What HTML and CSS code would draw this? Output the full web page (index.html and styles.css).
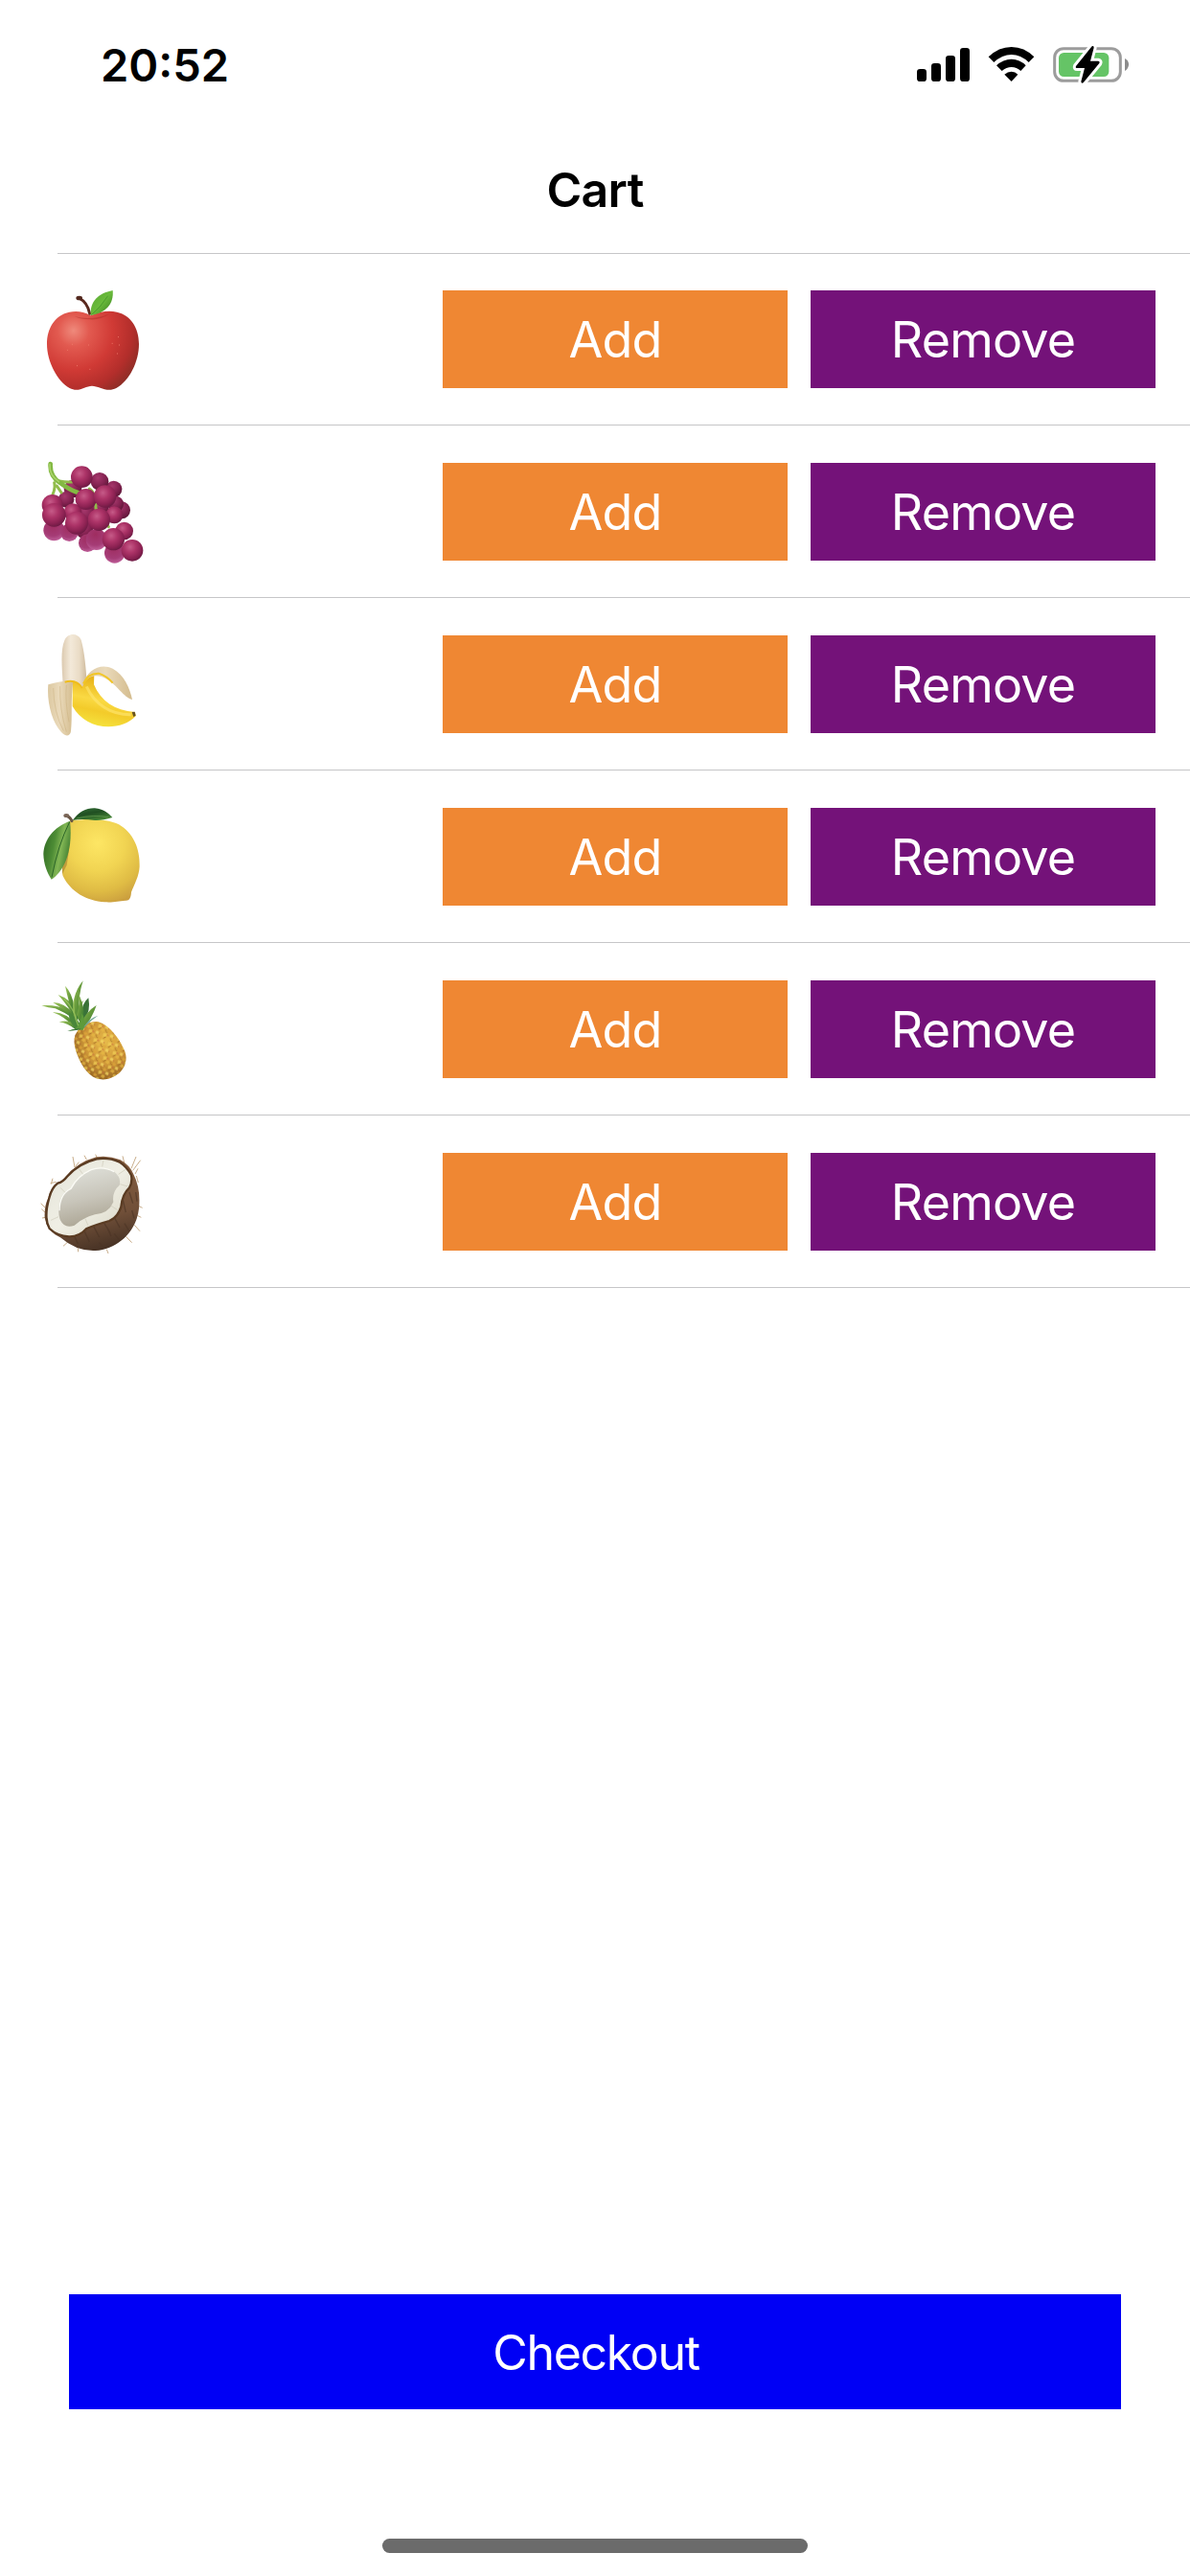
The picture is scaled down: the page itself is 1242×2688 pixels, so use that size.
FILE: index.html
```html
<!DOCTYPE html>
<html lang="en">
<head>
<meta charset="utf-8">
<title>Cart</title>
<link rel="stylesheet" href="styles.css">
</head>
<body>
<div class="screen">
  <header class="status">
    <time class="clock">20:52</time>
    <svg class="indicators" viewBox="0 0 810 240" aria-hidden="true">
      <g>
        <rect x="81" y="126" width="30" height="39" rx="10"/>
        <rect x="126" y="108" width="30" height="57" rx="10"/>
        <rect x="171" y="84" width="30" height="81" rx="10"/>
        <rect x="216" y="60" width="30" height="105" rx="10"/>
      </g>
      <path d="M305 88Q337 57 377 57T448 88L431 105Q406 81 377 81T322 105Z"/>
      <path d="M330 115Q351 95 377 95T422 115L406 132Q393 120 377 120T347 132Z"/>
      <path d="M355 143Q365 134 377 134T397 143L377 165Z"/>
      <rect x="512" y="62" width="206" height="101" rx="28" fill="none" stroke="#9c9c9c" stroke-width="9"/>
      <path d="M732 93Q744 99 744 112T732 132Z" fill="#8c8c8c"/>
      <rect x="525" y="75" width="157" height="75" rx="16" fill="#65c466"/>
      <path class="bolt" d="M629 55L579 117Q576 123 583 123H606L595 165Q595 172 602 169L652 108Q655 102 648 101H624L635 59Q635 52 629 55Z"/>
    </svg>
  </header>
  <h1 class="title">Cart</h1>
  <ul class="list">
    <li class="row">
      <svg class="fruit" viewBox="0 0 390 390" role="img" aria-label="Apple">
        <defs>
          <radialGradient id="apple" gradientUnits="userSpaceOnUse" cx="140" cy="165" r="225"><stop offset="0" stop-color="#ef8a7c"/><stop offset=".22" stop-color="#e25a50"/><stop offset=".55" stop-color="#d03a35"/><stop offset=".82" stop-color="#b32e2b"/><stop offset="1" stop-color="#8f2d26"/></radialGradient>
          <linearGradient id="appleLeaf" x1="0" y1="0" x2="1" y2="1"><stop offset=".2" stop-color="#5fae35"/><stop offset=".5" stop-color="#6abb3c"/><stop offset="1" stop-color="#347a1c"/></linearGradient>
        </defs>
        <path d="M194 118C170 104 148 103 127 107C84 116 57 155 57 207C57 262 90 324 128 345C157 360 176 338 198 338C220 338 245 360 274 345C315 323 345 262 345 207C345 155 318 116 276 107C248 101 222 106 194 118Z" fill="url(#apple)"/>
        <path d="M143 120Q194 135 252 113Q223 132 192 130Q163 130 143 120Z" fill="#a92825" opacity=".45"/>
        <path d="M120 226h3M150 275h3M186 210h3M279 185h3M276 237h3M282 210h3M190 286h3M260 205h3M135 208h3" stroke="#eb7767" stroke-width="3"/>
        <path d="M157 63Q184 76 191 112" fill="none" stroke="#59281d" stroke-width="9" stroke-linecap="round"/>
        <ellipse cx="158" cy="63" rx="10" ry="7" fill="#542a20"/>
        <path d="M194 117C191 74 217 48 263 39C267 82 241 110 194 117Z" fill="url(#appleLeaf)"/>
        <path d="M196 116Q223 95 248 56" fill="none" stroke="#3d8d25" stroke-width="2"/>
      </svg>
      <button class="btn add">Add</button>
      <button class="btn remove">Remove</button>
    </li>
    <li class="row">
      <svg class="fruit" viewBox="0 0 390 390" role="img" aria-label="Grapes">
        <defs>
          <radialGradient id="grape" cx=".4" cy=".34" r=".68"><stop offset="0" stop-color="#c65b88"/><stop offset=".4" stop-color="#ad3468"/><stop offset=".76" stop-color="#8d2253"/><stop offset="1" stop-color="#6c1a43"/></radialGradient>
          <radialGradient id="grapeDark" cx=".4" cy=".3" r=".7"><stop offset="0" stop-color="#a6386c"/><stop offset=".6" stop-color="#842251"/><stop offset="1" stop-color="#601739"/></radialGradient>
          <radialGradient id="grapeLow" cx=".45" cy=".25" r=".8"><stop offset="0" stop-color="#9f2d60"/><stop offset=".65" stop-color="#a53c76"/><stop offset="1" stop-color="#c466a0"/></radialGradient>
        </defs>
        <g fill="url(#grapeDark)">
          <circle cx="266" cy="121" r="26"/><circle cx="222" cy="97" r="28"/><circle cx="138" cy="120" r="28"/><circle cx="291" cy="187" r="27"/><circle cx="272" cy="168" r="25"/><circle cx="180" cy="200" r="30"/><circle cx="175" cy="250" r="27"/><circle cx="117" cy="154" r="25"/><circle cx="225" cy="180" r="26"/>
        </g>
        <g fill="none" stroke="#91bc4b" stroke-width="9" stroke-linecap="round"><path d="M80 101Q84 118 75 138M88 111L102 132M96 96Q122 101 139 98M190 120Q210 130 210 182L250 239"/></g>
        <path d="M68 42C66 69 76 87 97 101S132 126 154 132" fill="none" stroke="#83b943" stroke-width="14" stroke-linecap="round"/>
        <path d="M66 44C64 67 75 85 94 98" fill="none" stroke="#a8d269" stroke-width="5" stroke-linecap="round"/>
        <g fill="url(#grapeLow)">
          <circle cx="79" cy="250" r="33"/><circle cx="127" cy="257" r="28"/><circle cx="184" cy="290" r="28"/><circle cx="212" cy="279" r="33"/><circle cx="269" cy="321" r="32"/>
        </g>
        <g fill="url(#grape)">
          <circle cx="166" cy="83" r="34"/><circle cx="74" cy="171" r="33"/><circle cx="138" cy="194" r="28"/><circle cx="179" cy="153" r="33"/><circle cx="239" cy="144" r="35"/><circle cx="268" cy="202" r="27"/><circle cx="79" cy="202" r="37"/><circle cx="150" cy="227" r="36"/><circle cx="220" cy="217" r="35"/><circle cx="299" cy="252" r="28"/><circle cx="265" cy="278" r="35"/><circle cx="324" cy="313" r="34"/>
        </g>
      </svg>
      <button class="btn add">Add</button>
      <button class="btn remove">Remove</button>
    </li>
    <li class="row">
      <svg class="fruit" viewBox="0 0 390 390" role="img" aria-label="Banana">
        <defs>
          <linearGradient id="bananaFlesh"><stop offset="0" stop-color="#dccab0"/><stop offset=".35" stop-color="#f3e9d9"/><stop offset=".7" stop-color="#eadcc6"/><stop offset="1" stop-color="#cdb99b"/></linearGradient>
          <linearGradient id="bananaSkin" x1=".35" y1=".1" x2=".15" y2=".9"><stop offset="0" stop-color="#e9b51b"/><stop offset=".45" stop-color="#fad943"/><stop offset=".7" stop-color="#f3cb2a"/><stop offset="1" stop-color="#f5e03b"/></linearGradient>
          <linearGradient id="bananaPeel"><stop offset="0" stop-color="#dcc8a0"/><stop offset=".45" stop-color="#eadabb"/><stop offset="1" stop-color="#d4bc8e"/></linearGradient>
        </defs>
        <path d="M107 191C104 140 99 83 112 55C121 31 153 30 164 53C175 91 179 143 182 184L168 204Q140 181 107 191Z" fill="url(#bananaFlesh)"/>
        <path d="M137 184Q157 182 167 203Q176 174 205 159L204 193C226 245 268 274 333 279L335 292C299 330 230 335 184 308Q154 291 137 261Z" fill="url(#bananaSkin)"/>
        <path d="M181 199C206 254 256 288 320 287" fill="none" stroke="#ffe671" stroke-width="9" opacity=".6"/>
        <path d="M323 279L332 278L335 290L328 294Z" fill="#675322"/>
        <path d="M171 189C184 147 225 124 263 143C298 161 317 205 324 240C298 235 276 193 242 175C218 161 190 162 171 189Z" fill="url(#bananaPeel)"/>
        <path d="M171 190Q185 157 219 158Q244 166 263 188" fill="none" stroke="#f2c625" stroke-width="6"/>
        <path d="M139 182C112 181 88 186 61 193C56 248 73 315 105 345C117 357 130 354 132 339C137 294 131 239 139 182Z" fill="url(#bananaPeel)"/>
        <path d="M77 204Q78 280 109 338M98 198Q96 270 118 341M118 194Q113 245 126 310" fill="none" stroke="#c8ad7b" stroke-width="3" opacity=".45"/>
        <path d="M113 185Q150 175 167 204" fill="none" stroke="#efbd1c" stroke-width="6"/>
      </svg>
      <button class="btn add">Add</button>
      <button class="btn remove">Remove</button>
    </li>
    <li class="row">
      <svg class="fruit" viewBox="0 0 390 390" role="img" aria-label="Lemon">
        <defs>
          <radialGradient id="lemon" gradientUnits="userSpaceOnUse" cx="215" cy="150" r="215"><stop offset="0" stop-color="#fde664"/><stop offset=".4" stop-color="#f1d452"/><stop offset=".7" stop-color="#dfbb44"/><stop offset="1" stop-color="#c2933c"/></radialGradient>
          <linearGradient id="lemonLeaf" x1="0" y1=".2" x2="1" y2=".6"><stop offset="0" stop-color="#2f6923"/><stop offset=".4" stop-color="#4d8c35"/><stop offset=".65" stop-color="#82b654"/><stop offset="1" stop-color="#38772c"/></linearGradient>
          <linearGradient id="lemonLeafTop" x1="0" y1="0" x2=".6" y2="1"><stop offset="0" stop-color="#347137"/><stop offset=".5" stop-color="#204f22"/><stop offset="1" stop-color="#438434"/></linearGradient>
        </defs>
        <path d="M130 79C184 72 247 72 282 91C326 116 349 166 347 222C346 252 330 280 321 303C320 321 315 330 303 329C280 330 267 336 238 334C181 330 131 302 107 252C102 232 103 165 130 79Z" fill="url(#lemon)"/>
        <path d="M130 80Q102 158 105 246L119 218Q130 158 130 80Z" fill="#98722b" opacity=".5"/>
        <path d="M137 78C158 51 180 39 207 40C233 42 251 57 262 69C240 75 223 79 207 78C183 75 158 73 137 78Z" fill="url(#lemonLeafTop)"/>
        <path d="M151 72Q203 59 250 68" fill="none" stroke="#649a51" stroke-width="3" opacity=".7"/>
        <path d="M129 80C78 99 47 139 46 183C47 218 58 242 71 263C105 241 140 184 129 80Z" fill="url(#lemonLeaf)"/>
        <path d="M128 83Q92 154 72 256" fill="none" stroke="#2b6528" stroke-width="3"/>
        <path d="M116 64Q129 67 135 80" fill="none" stroke="#695544" stroke-width="9" stroke-linecap="round"/>
        <ellipse cx="118" cy="63" rx="9" ry="6" fill="#7a6658"/>
      </svg>
      <button class="btn add">Add</button>
      <button class="btn remove">Remove</button>
    </li>
    <li class="row">
      <svg class="fruit" viewBox="0 0 390 390" role="img" aria-label="Pineapple">
        <defs>
          <radialGradient id="pine" cx=".6" cy=".35" r=".7"><stop offset="0" stop-color="#e6ba4a"/><stop offset=".55" stop-color="#cf9738"/><stop offset="1" stop-color="#8e5f20"/></radialGradient>
          <linearGradient id="pineLeaf" x1="0" y1="0" x2="1" y2="1"><stop offset="0" stop-color="#9cc35a"/><stop offset=".5" stop-color="#62973a"/><stop offset="1" stop-color="#2e6f32"/></linearGradient>
          <pattern id="pineScale" width="34" height="32" patternUnits="userSpaceOnUse" patternTransform="rotate(-28)">
            <path d="M2 11L9 2L17 8L12 15Z" fill="#f3d257"/><path d="M20 5L29 3L32 12L24 14Z" fill="#e0a63a"/><path d="M5 22L14 18L18 27L10 31Z" fill="#e8b944"/><path d="M21 21L28 16L33 24L26 30Z" fill="#f7dd66"/><path d="M14 13L20 12L18 19Z" fill="#c8603c"/><path d="M28 28L33 27L31 32Z" fill="#bd5c3a"/><path d="M0 17L10 16M18 1L20 7M17 30L22 29" stroke="#9c641f" stroke-width="3"/>
          </pattern>
        </defs>
        <path d="M145 211C157 184 184 168 213 168C246 173 284 217 301 262C311 287 300 316 282 330C260 348 235 354 212 346C180 333 160 296 148 260Q139 233 145 211Z" fill="url(#pine)"/>
        <path d="M145 211C157 184 184 168 213 168C246 173 284 217 301 262C311 287 300 316 282 330C260 348 235 354 212 346C180 333 160 296 148 260Q139 233 145 211Z" fill="url(#pineScale)" opacity=".7"/>
        <g fill="url(#pineLeaf)">
          <path d="M187 94Q195 138 173 163L165 142Q169 108 187 94Z" fill="#397238"/>
          <path d="M170 102Q160 137 172 158L165 176L148 151Q153 116 170 102Z"/>
          <path d="M212 117Q199 156 170 193L160 181Q178 137 212 117Z"/>
          <path d="M217 149Q196 163 176 184L168 192Q187 157 217 149Z" fill="#74a99a"/>
          <path d="M40 118Q84 114 124 133L141 159Q112 139 83 127Q62 125 40 118Z"/>
          <path d="M76 108Q108 107 143 144L151 175Q112 129 76 108Z"/>
          <path d="M75 139Q114 136 154 181L144 187Q111 151 75 139Z"/>
          <path d="M95 169Q135 160 163 187L149 194Q122 173 95 169Z"/>
          <path d="M92 84Q129 96 154 140L153 169Q123 118 92 84Z"/>
          <path d="M114 56Q137 81 142 121L139 148Q126 112 114 56Z"/>
          <path d="M170 40Q154 91 157 140L143 166Q127 92 170 40Z"/>
          <path d="M153 74Q164 107 150 146L166 177Q184 137 153 74Z"/>
          <path d="M125 138Q147 151 165 182L150 195Q124 168 125 138Z" fill="#4a873a"/>
          <path d="M166 142Q182 165 170 195L145 191Q162 176 166 142Z" fill="#5d9a3b"/>
          <path d="M121 198Q145 187 166 191Q139 197 121 198Z" fill="#3c783b"/>
        </g>
        <path d="M142 101Q135 134 155 181M111 97Q139 124 153 170" fill="none" stroke="#a4cc62" stroke-width="4" opacity=".7"/>
      </svg>
      <button class="btn add">Add</button>
      <button class="btn remove">Remove</button>
    </li>
    <li class="row">
      <svg class="fruit" viewBox="0 0 390 390" role="img" aria-label="Coconut">
        <defs>
          <linearGradient id="husk" x1=".4" y1="0" x2=".65" y2="1"><stop offset="0" stop-color="#8b6242"/><stop offset=".65" stop-color="#715039"/><stop offset="1" stop-color="#443023"/></linearGradient>
          <linearGradient id="hollow" x1=".4" y1="0" x2=".65" y2="1"><stop offset="0" stop-color="#dedfd8"/><stop offset=".5" stop-color="#c8c5ba"/><stop offset="1" stop-color="#a8a18f"/></linearGradient>
          <linearGradient id="meat" x1="0" y1="0" x2="1" y2="1"><stop offset="0" stop-color="#e3e3d8"/><stop offset=".5" stop-color="#f0efe5"/><stop offset="1" stop-color="#d8d5c4"/></linearGradient>
        </defs>
        <g fill="none" stroke="#c9ae8b" stroke-width="3"><path d="M144 85L138 51M145 84L157 68M181 60L174 47M214 54L209 44M299 70L294 49M321 88L336 51M326 94L350 62M333 105L342 88M343 132L337 111M70 137L75 119M86 130L68 134M51 210L38 197M51 225L40 215M52 241L42 243M343 205L356 211M340 235L352 241M331 265L348 284M304 301L323 320M244 341L249 354M154 337L155 349M120 320L108 331"/></g>
        <path d="M61 181Q68 148 88 132Q104 131 112 118Q151 68 212 52Q250 46 287 61Q316 77 328 106Q351 150 345 213C338 284 279 341 209 345Q150 348 99 304Q56 283 50 242Q48 205 61 181Z" fill="url(#husk)"/>
        <path d="M295 187L304 225M315 162L326 197M323 219L330 244M267 239L285 273M300 260L315 285M235 257L256 291M203 268L221 303M173 281L190 318M268 292L285 314M221 320L233 334M143 300L154 323M245 272L258 300M335 162L339 191" stroke="#4b3425" stroke-width="4" opacity=".6"/>
        <path d="M64 180Q72 148 91 134Q107 130 120 113Q156 72 213 58Q252 53 283 67Q307 82 321 109Q325 132 315 148Q293 168 289 208Q279 240 252 252Q209 264 181 276Q158 302 126 301Q89 299 65 276Q46 243 64 180Z" fill="url(#meat)" stroke="#5a3b22" stroke-width="7"/>
        <path d="M95 205Q98 165 132 151Q152 112 195 92Q232 79 268 98Q291 117 284 140Q260 161 265 193Q250 229 207 232Q171 241 143 266Q112 277 99 250Q91 230 95 205Z" fill="url(#hollow)"/>
        <path d="M96 220Q96 168 132 151Q153 111 195 92Q232 79 267 98" fill="none" stroke="#fbfbf5" stroke-width="4"/>
        <path d="M99 148L114 163M157 89L170 106M234 61L230 82M303 91L281 106M310 144L286 137M278 218L257 204M186 267L177 245M69 250L93 239" stroke="#cfccba" stroke-width="3" opacity=".65"/>
      </svg>
      <button class="btn add">Add</button>
      <button class="btn remove">Remove</button>
    </li>
  </ul>
  <footer class="footer">
    <button class="checkout">Checkout</button>
    <div class="home"></div>
  </footer>
</div>
</body>
</html>
```
FILE: styles.css
```css
* { box-sizing: border-box; }

body {
  margin: 0;
  background: #fff;
  color: #000;
  font-family: Inter, "Liberation Sans", sans-serif;
}

.screen {
  display: flex;
  flex-direction: column;
  height: 2688px;
}

.status {
  display: flex;
  justify-content: space-between;
  align-items: flex-start;
  height: 132px;
  padding: 30px 42px 0 105px;
}

.clock {
  padding-top: 10px;
  font-size: 47px;
  font-weight: 600;
  line-height: 56px;
}

.indicators {
  width: 270px;
  height: 80px;
}

.bolt {
  stroke: #fff;
  stroke-width: 18px;
  stroke-linejoin: round;
  paint-order: stroke;
}

.title {
  height: 132px;
  margin: 0;
  font-size: 50px;
  font-weight: 600;
  letter-spacing: -0.7px;
  line-height: 132px;
  text-align: center;
}

.list {
  margin: 0;
  padding: 0;
  list-style: none;
  background: linear-gradient(#c6c6c8, #c6c6c8) 60px 0 / 100% 1px no-repeat;
}

.row {
  display: flex;
  align-items: center;
  gap: 24px;
  height: 180px;
  padding: 0 36px 0 30px;
  background: linear-gradient(#c6c6c8, #c6c6c8) 60px 100% / 100% 1px no-repeat;
}

.fruit {
  width: 130px;
  height: 130px;
  margin: 2px auto 0 0;
}

.btn,
.checkout {
  margin: 0;
  padding: 0;
  border: 0;
  color: #fff;
  font-family: inherit;
  font-weight: 400;
}

.btn {
  width: 360px;
  height: 102px;
  font-size: 52px;
  letter-spacing: -0.8px;
}

.add { background: #ef8733; }

.remove { background: #741279; }

.footer {
  display: flex;
  flex-direction: column;
  justify-content: space-between;
  align-items: center;
  height: 294px;
  margin-top: auto;
  padding: 0 72px 24px;
}

.checkout {
  width: 100%;
  height: 120px;
  padding: 2px 0 0 2px;
  background: #0000f5;
  font-size: 50px;
  letter-spacing: -1.3px;
}

.home {
  width: 444px;
  height: 15px;
  border-radius: 8px;
  background: #6b6b6b;
}
```
